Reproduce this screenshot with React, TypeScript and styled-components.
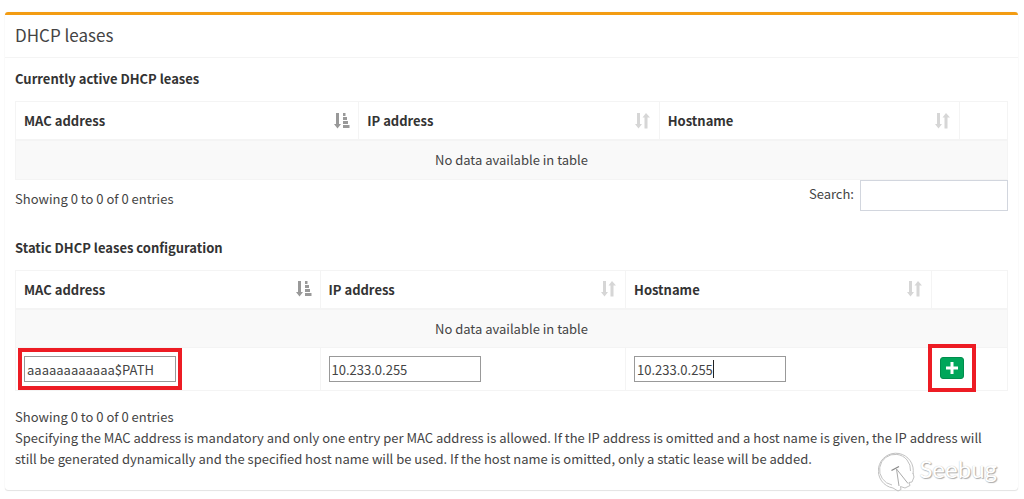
import React from "react";
import styled, { createGlobalStyle } from "styled-components";

const GlobalStyle = createGlobalStyle`
  * { box-sizing: border-box; }
  body {
    margin: 0;
    background: #fff;
    color: #444;
    font-family: "Noto Sans CJK SC", "Open Sans", sans-serif;
    font-size: 13px;
    line-height: 21px;
  }
  input, button { font: inherit; color: inherit; }
`;

const Page = styled.main`
  padding: 12px 6px 9px 5px;
`;

const Box = styled.section`
  position: relative;
  border-top: 3px solid #f39c12;
  border-radius: 3px;
  box-shadow: 0 1px 1px rgba(0, 0, 0, 0.1), 0 0 1px rgba(0, 0, 0, 0.12);
`;

const BoxHeader = styled.header`
  padding: 9px 10px 11px;
  border-bottom: 1px solid #f4f4f4;
`;

const BoxTitle = styled.h3`
  margin: 0;
  font-size: 17px;
  line-height: 22px;
  font-weight: 400;
`;

const BoxBody = styled.div`
  padding: 10px;
`;

const SectionTitle = styled.h4`
  margin: 0 0 12px;
  font-size: 13px;
  line-height: 21px;
  font-weight: 700;
  color: #333;
`;

const Table = styled.table`
  width: 100%;
  table-layout: fixed;
  border-collapse: collapse;
`;

const HeadCell = styled.th<{ $width?: string }>`
  width: ${(p) => p.$width ?? "auto"};
  height: 38px;
  padding: 8px;
  border: 1px solid #f4f4f4;
  border-bottom-width: 2px;
  text-align: left;
  font-weight: 700;
  color: #333;
`;

const HeadContent = styled.div`
  display: flex;
  align-items: center;
  justify-content: space-between;
`;

const EmptyCell = styled.td`
  height: 39px;
  padding: 8px;
  border: 1px solid #f4f4f4;
  background: #f9f9f9;
  text-align: center;
`;

const FieldCell = styled.td`
  height: 43px;
  padding: 8px;
  border: 1px solid #f4f4f4;
  vertical-align: top;
`;

const Field = styled.div`
  position: relative;
  display: flex;
  width: 152px;
`;

const LeaseInput = styled.input`
  width: 100%;
  height: 26px;
  padding: 1px 2px;
  border: 1px solid #999;
  background: #fff;
  color: #444;
`;

const Caret = styled.span`
  position: absolute;
  top: 4px;
  left: 79px;
  width: 1px;
  height: 18px;
  background: #222;
`;

const Highlight = styled.span<{ $x: number; $y: number }>`
  position: absolute;
  inset: ${(p) => `-${p.$y}px -${p.$x}px`};
  border: 4px solid #ed1c24;
  pointer-events: none;
`;

const AddWrap = styled.div`
  position: relative;
  display: flex;
  width: 24px;
  margin-top: 1px;
`;

const AddButton = styled.button`
  display: flex;
  align-items: center;
  justify-content: center;
  width: 24px;
  height: 22px;
  padding: 0;
  border: 1px solid #008d4c;
  border-radius: 3px;
  background: #00a65a;
`;

const TableFooter = styled.div`
  display: flex;
  justify-content: space-between;
  align-items: flex-start;
  margin-bottom: 26px;
`;

const Info = styled.p`
  margin: 0;
  padding-top: 8px;
`;

const StaticInfo = styled(Info)`
  padding-top: 15px;
`;

const Note = styled.p`
  margin: 0 0 11px;
  padding-right: 10px;
`;

const SearchLabel = styled.label`
  display: flex;
  align-items: flex-start;
  gap: 6px;
  line-height: 28px;
`;

const SearchInput = styled.input`
  width: 148px;
  height: 31px;
  padding: 5px 10px;
  border: 1px solid #d2d6de;
  background: #fff;
`;

const Watermark = styled.div`
  position: absolute;
  right: 21px;
  bottom: -2px;
  display: flex;
  align-items: flex-start;
  gap: 3px;
  color: #fff;
  font-family: Lato, sans-serif;
  font-size: 24px;
  line-height: 34px;
  text-shadow: 1px 1px 1px #aaa, 0 0 1px #bbb;
`;

const SortedIcon = () => (
  <svg width="16" height="16" viewBox="0 0 16 16" fill="#999" aria-hidden="true">
    <path d="M2 0h3v11h2l-3.500 4.500L0 11h2zM9 0h2.500v3H9zM9 4h4v3H9zM9 8h5v3H9zM9 12h6.500v3H9z" />
  </svg>
);

const SortIcon = () => (
  <svg width="16" height="16" viewBox="0 0 16 16" fill="#d6d6d6" aria-hidden="true">
    <path d="M2 0h3v11h2l-3.500 4.500L0 11h2zM9.500 15.500h3V4.500H15L11 0 7.500 4.500h2z" />
  </svg>
);

const DishLogo = () => (
  <svg
    width="38"
    height="40"
    viewBox="0 0 38 40"
    fill="none"
    aria-hidden="true"
    strokeLinejoin="round"
  >
    <g stroke="#c2c2c2" strokeWidth="1">
      <path d="M15 36A17.500 17.500 0 1 1 35 22" />
      <path d="M14 33A15.500 15.500 0 1 1 32.500 19" />
      <path d="M15 36 20 39 23 37.500 22.500 34.500 27 36 32 33.500 31 30.500 34 30 36 25 35 21" />
    </g>
    <path d="M18.500 17 21 34M18.500 17 30 31.500" stroke="#aaa" strokeWidth="1" />
    <path d="M13.500 18.500 21 14.500" stroke="#888" strokeWidth="1.200" />
  </svg>
);

const Head = ({ widths }: { widths: string[] }) => (
  <thead>
    <tr>
      {["MAC address", "IP address", "Hostname"].map((name, i) => (
        <HeadCell key={name} $width={widths[i]} scope="col">
          <HeadContent>
            {name}
            {i === 0 ? <SortedIcon /> : <SortIcon />}
          </HeadContent>
        </HeadCell>
      ))}
      <HeadCell as="td" />
    </tr>
  </thead>
);

const EmptyRow = () => (
  <tr>
    <EmptyCell colSpan={4}>No data available in table</EmptyCell>
  </tr>
);

export default function App() {
  return (
    <>
      <GlobalStyle />
      <Page>
        <Box>
          <BoxHeader>
            <BoxTitle>DHCP leases</BoxTitle>
          </BoxHeader>
          <BoxBody>
            <SectionTitle>Currently active DHCP leases</SectionTitle>
            <Table>
              <Head widths={["34.6%", "30.3%", "30.3%"]} />
              <tbody>
                <EmptyRow />
              </tbody>
            </Table>
            <TableFooter>
              <Info>Showing 0 to 0 of 0 entries</Info>
              <SearchLabel>
                Search:
                <SearchInput type="search" />
              </SearchLabel>
            </TableFooter>

            <SectionTitle>Static DHCP leases configuration</SectionTitle>
            <Table>
              <Head widths={["30.7%", "30.8%", "30.8%"]} />
              <tbody>
                <EmptyRow />
                <tr>
                  <FieldCell>
                    <Field>
                      <LeaseInput aria-label="MAC address" defaultValue="aaaaaaaaaaaa$PATH" />
                      <Highlight $x={6} $y={8} />
                    </Field>
                  </FieldCell>
                  <FieldCell>
                    <Field>
                      <LeaseInput aria-label="IP address" defaultValue="10.233.0.255" />
                    </Field>
                  </FieldCell>
                  <FieldCell>
                    <Field>
                      <LeaseInput aria-label="Hostname" defaultValue="10.233.0.255" />
                      <Caret />
                    </Field>
                  </FieldCell>
                  <FieldCell>
                    <AddWrap>
                      <AddButton type="button" aria-label="Add static lease">
                        <svg width="12" height="12" viewBox="0 0 12 12" fill="#fff">
                          <path d="M4.500 0h3v4.500H12v3H7.500V12h-3V7.500H0v-3h4.500z" />
                        </svg>
                      </AddButton>
                      <Highlight $x={12} $y={13} />
                    </AddWrap>
                  </FieldCell>
                </tr>
              </tbody>
            </Table>
            <StaticInfo>Showing 0 to 0 of 0 entries</StaticInfo>
            <Note>
              Specifying the MAC address is mandatory and only one entry per MAC address is allowed.
              If the IP address is omitted and a host name is given, the IP address will still be
              generated dynamically and the specified host name will be used. If the host name is
              omitted, only a static lease will be added.
            </Note>
          </BoxBody>
          <Watermark>
            <DishLogo />
            Seebug
          </Watermark>
        </Box>
      </Page>
    </>
  );
}
